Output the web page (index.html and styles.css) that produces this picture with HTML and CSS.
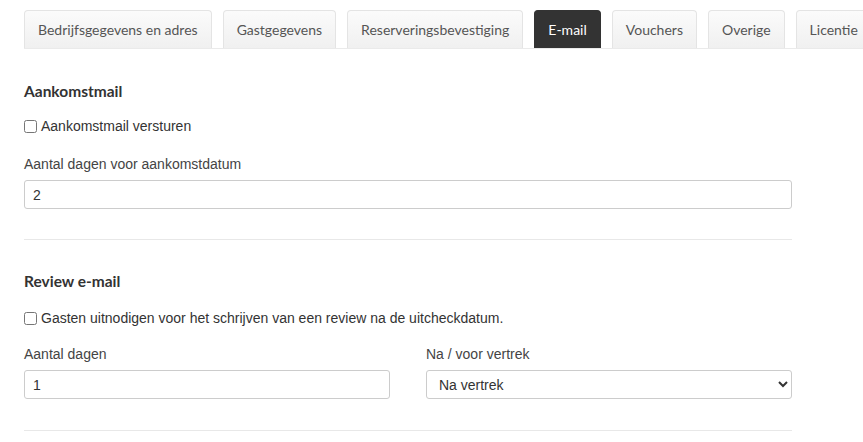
FILE: index.html
```html
<!DOCTYPE html>
<html lang="nl">
<head>
    <meta charset="UTF-8">
    <meta name="viewport" content="width=device-width, initial-scale=1.0">
    <title>Instellingen - E-mail</title>
    <link rel="stylesheet" href="styles.css">
</head>
<body>
    <div class="page">
        <ul class="tabs">
            <li class="tab">Bedrijfsgegevens en adres</li>
            <li class="tab">Gastgegevens</li>
            <li class="tab">Reserveringsbevestiging</li>
            <li class="tab active">E-mail</li>
            <li class="tab">Vouchers</li>
            <li class="tab">Overige</li>
            <li class="tab">Licentie</li>
        </ul>

        <form class="settings">
            <section class="block">
                <h3>Aankomstmail</h3>
                <label class="check"><input type="checkbox"> Aankomstmail versturen</label>
                <div class="field">
                    <label>Aantal dagen voor aankomstdatum</label>
                    <input type="text" value="2">
                </div>
            </section>

            <section class="block">
                <h3>Review e-mail</h3>
                <label class="check"><input type="checkbox"> Gasten uitnodigen voor het schrijven van een review na de uitcheckdatum.</label>
                <div class="row">
                    <div class="field">
                        <label>Aantal dagen</label>
                        <input type="text" value="1">
                    </div>
                    <div class="field">
                        <label>Na / voor vertrek</label>
                        <select>
                            <option>Na vertrek</option>
                            <option>Voor vertrek</option>
                        </select>
                    </div>
                </div>
            </section>
        </form>
    </div>
</body>
</html>
```

FILE: styles.css
```css
body {
    margin: 0;
    background: #fff;
    color: #333;
    font-family: "Liberation Sans", Arial, sans-serif;
    font-size: 14px;
}
.page {
    padding: 10px 0 0 24px;
}
.tabs {
    display: flex;
    gap: 11px;
    list-style: none;
    margin: 0;
    padding: 0;
    border-bottom: 1px solid #eaeaea;
}
.tab {
    height: 38px;
    line-height: 38px;
    padding: 0 13px;
    border: 1px solid #e4e4e4;
    border-bottom: none;
    border-radius: 4px 4px 0 0;
    background: linear-gradient(#fbfbfb, #f0f0f0);
    color: #555;
    font-family: Lato, "Open Sans", sans-serif;
    font-size: 14px;
    white-space: nowrap;
    box-sizing: border-box;
}
.tab.active {
    background: #333;
    border-color: #333;
    color: #fff;
}
.settings {
    width: 768px;
}
.block {
    border-bottom: 1px solid #e8e8e8;
    padding: 32px 0 30px;
}
.block + .block {
    padding-top: 31px;
    padding-bottom: 31px;
}
h3 {
    margin: 0;
    font-family: Lato, "Open Sans", sans-serif;
    font-size: 15.5px;
    font-weight: bold;
    line-height: 20px;
    color: #333;
}
.check {
    display: flex;
    align-items: center;
    gap: 4px;
    margin-top: 15px;
    line-height: 20px;
    color: #333;
}
.block + .block .check {
    margin-top: 17px;
}
.check input {
    margin: 0;
    width: 13px;
    height: 13px;
}
.field {
    margin-top: 19px;
}
.block + .block .field {
    margin-top: 17px;
}
.field label {
    display: block;
    line-height: 18px;
    margin-bottom: 7px;
    color: #444;
}
.field input,
.field select {
    display: block;
    width: 100%;
    height: 29px;
    box-sizing: border-box;
    border: 1px solid #ccc;
    border-radius: 3px;
    padding: 0 8px;
    font-family: "Liberation Sans", Arial, sans-serif;
    font-size: 14px;
    color: #333;
    background: #fff;
}
.row {
    display: grid;
    grid-template-columns: 1fr 1fr;
    gap: 36px;
}
```
